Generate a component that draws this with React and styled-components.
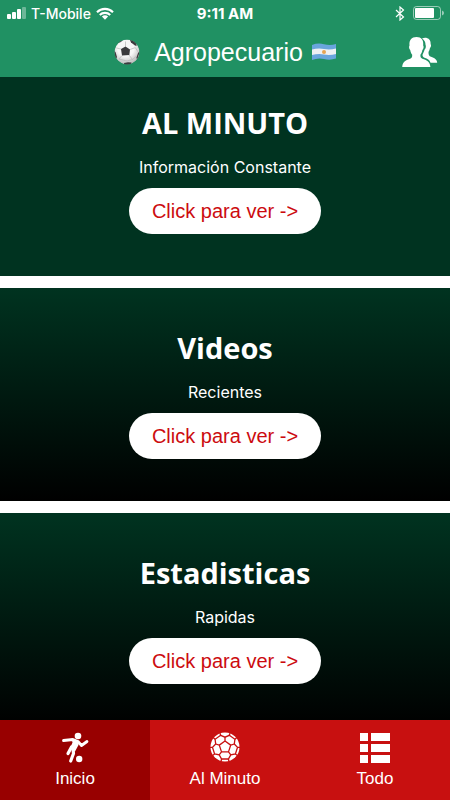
import React, { useState } from "react";
import styled, { createGlobalStyle } from "styled-components";

const GlobalStyle = createGlobalStyle`
  * {
    box-sizing: border-box;
  }
  body {
    margin: 0;
    font-family: "Liberation Sans", Arial, sans-serif;
  }
`;

const Screen = styled.div`
  display: flex;
  flex-direction: column;
  height: 100vh;
  background-color: white;
`;

const Header = styled.header`
  flex: none;
  color: white;
  background-color: #209163;
`;

const StatusBar = styled.div`
  display: grid;
  grid-template-columns: 1fr auto 1fr;
  align-items: center;
  height: 26px;
  padding: 0 6px;
  font-family: Inter, sans-serif;
  font-size: 14px;
  font-weight: 500;
`;

const StatusGroup = styled.div`
  display: flex;
  align-items: center;
  justify-content: ${({ $end }) => ($end ? "flex-end" : "flex-start")};
  gap: ${({ $end }) => ($end ? "8px" : "5px")};
`;

const Clock = styled.time`
  font-size: 15px;
  font-weight: 700;
`;

const TitleBar = styled.div`
  display: grid;
  grid-template-columns: 1fr auto 1fr;
  align-items: center;
  height: 51px;
  padding: 0 12px;
`;

const Title = styled.h1`
  grid-column: 2;
  display: flex;
  align-items: center;
  margin: 0;
  font-size: 25px;
  font-weight: 400;
  line-height: 32px;
`;

const TitleText = styled.span`
  margin: 0 9px 0 14px;
`;

const IconButton = styled.button`
  display: flex;
  justify-self: end;
  padding: 0;
  border: none;
  color: inherit;
  background: none;
  cursor: pointer;
`;

const Content = styled.main`
  display: flex;
  flex: 1;
  flex-direction: column;
  gap: 12px;
  min-height: 0;
  overflow-y: auto;
  scrollbar-width: none;
`;

const Card = styled.section`
  display: flex;
  flex: none;
  flex-direction: column;
  align-items: center;
  padding: ${({ $flat }) => ($flat ? "28px" : "42px")} 16px 42px;
  color: white;
  background: ${({ $flat }) =>
    $flat ? "#003320" : "linear-gradient(#003320, #000000)"};
`;

const CardTitle = styled.h2`
  margin: 0 0 14px;
  font-family: "Open Sans", sans-serif;
  font-size: 29px;
  font-weight: 700;
  line-height: 36px;
`;

const CardText = styled.p`
  margin: 0 0 9px;
  font-family: Inter, sans-serif;
  font-size: 16px;
  line-height: 24px;
`;

const CardButton = styled.button`
  height: 46px;
  padding: 0 23px;
  border: none;
  border-radius: 23px;
  font-family: inherit;
  font-size: 20px;
  color: #cc0b0f;
  background-color: white;
  cursor: pointer;
`;

const TabBar = styled.nav`
  display: grid;
  flex: none;
  grid-template-columns: repeat(3, 1fr);
  height: 80px;
`;

const Tab = styled.button`
  display: flex;
  flex-direction: column;
  align-items: center;
  padding: 11px 0 0;
  border: none;
  font-family: inherit;
  font-size: 17px;
  line-height: 20px;
  color: white;
  background-color: ${({ $active }) => ($active ? "#980000" : "#c81010")};
  cursor: pointer;

  svg {
    margin-bottom: 4px;
  }
`;

const SignalIcon = () => (
  <svg width="20" height="12" viewBox="0 0 20 12" fill="currentColor">
    <rect x="1" y="7" width="4" height="5" rx="1" />
    <rect x="6" y="5" width="4" height="7" rx="1" />
    <rect x="11" y="2" width="4" height="10" rx="1" />
    <rect x="16" y="0" width="4" height="12" rx="1" opacity="0.35" />
  </svg>
);

const WifiIcon = () => (
  <svg width="18" height="13" viewBox="0 0 18 13" fill="none">
    <g stroke="currentColor" strokeWidth="2.1">
      <path d="M1 5.2A11.4 11.4 0 0 1 17 5.2" />
      <path d="M3.8 8A7.4 7.4 0 0 1 14.2 8" />
    </g>
    <path d="M5.9 9.6a4.4 4.4 0 0 1 6.2 0L9 12.8z" fill="currentColor" />
  </svg>
);

const BluetoothIcon = () => (
  <svg width="10" height="15" viewBox="0 0 10 15" fill="none">
    <path
      d="M1 4l7.5 7L5 14V1l3.5 3L1 11"
      stroke="currentColor"
      strokeWidth="1.2"
    />
  </svg>
);

const BatteryIcon = () => (
  <svg width="31" height="14" viewBox="0 0 31 14">
    <rect
      x="0.5"
      y="0.5"
      width="27"
      height="13"
      rx="3"
      fill="none"
      stroke="currentColor"
      opacity="0.55"
    />
    <rect x="2" y="2" width="19" height="10" rx="1" fill="currentColor" />
    <path d="M29 4.500q2 .8 2 2.500t-2 2.500z" fill="currentColor" opacity="0.55" />
  </svg>
);

const BallEmoji = () => (
  <svg width="26" height="26" viewBox="0 0 26 26">
    <defs>
      <radialGradient id="leather" cx="45%" cy="35%" r="65%">
        <stop offset="0.5" stopColor="#f7f7f7" />
        <stop offset="1" stopColor="#b9b9b9" />
      </radialGradient>
      <clipPath id="ballEdge">
        <circle cx="13" cy="13" r="12.5" />
      </clipPath>
    </defs>
    <g clipPath="url(#ballEdge)">
      <circle cx="13" cy="13" r="12.5" fill="url(#leather)" />
      <path
        d="M11.5 7.500V2.500M16 10.500l5.500-2M15 16l3.500 4.500M8 16.500L5 20M7 10L2.500 9M21.500 9l3 4.500M18.500 20.500l4-3.500M18.500 20.500L13 22l-8-2"
        fill="none"
        stroke="#b4b4b4"
        strokeWidth="0.7"
      />
      <g fill="#3b3b3d">
        <path d="M7 10l4.500-2.500 4.500 3-.7 5.500-7.300.5z" />
        <path d="M16 1l1 2.500 4 3L22.500 7V0z" />
        <path d="M4 4l3-1 2-2.500L4 0z" />
        <path d="M0 12l1.500 1L3 18l-1.500 3z" />
        <path d="M26 12l-2 2-1.500 4.500L23 21z" />
        <path d="M10 24l4-.8 3.500.3-1 3h-6z" />
      </g>
    </g>
  </svg>
);

const FlagEmoji = () => (
  <svg width="24" height="18" viewBox="0 0 24 18">
    <defs>
      <clipPath id="flagWave">
        <path d="M0 2q6-2.500 12-.8T24 1v14.500q-6 2-12 .5T0 17z" />
      </clipPath>
    </defs>
    <g clipPath="url(#flagWave)">
      <rect width="24" height="18" fill="#69a5dd" />
      <path d="M0 6.500q6-1.500 12-.5t12-.5v5.500q-6 1.500-12 .5T0 12z" fill="#eef0f3" />
      <circle cx="12" cy="9" r="2" fill="#e5a454" />
    </g>
  </svg>
);

const PeopleIcon = () => (
  <svg width="36" height="30" viewBox="0 0 36 30" fill="currentColor">
    <path d="M20 1.500C24.500-.5 29 2 28.600 7c.8 1 .4 3-.6 4-.4 2-1 3-1.500 4 0 3 .5 4 2.500 4.800 3.500 1.200 6 2.500 6.200 6H28.500c-1-3-3-4-6-5-1.500-.6-2-1.500-2-3 1-2 1.600-3.500 2-5 1.500-1.500 1.600-3.500 1-5C23.500 5 22.500 3 20 1.500z" />
    <path d="M14.500 0c5 0 7.300 3 6.700 8.500.8 1 .4 3.500-.8 4.500-.5 2.500-1.200 3.800-2 4.800 0 2.200.2 3.200 2 4 4 1.400 7.600 2.600 8 8.200H.2c.4-5.600 4-6.800 8-8.200 1.800-.8 2-1.800 2-4-.8-1-1.500-2.300-2-4.800C7 12 6.700 9.500 7.500 8.500 7 3 9.500 0 14.500 0z" />
  </svg>
);

const PlayerIcon = () => (
  <svg width="30" height="34" viewBox="0 0 30 34" fill="currentColor">
    <circle cx="18" cy="5" r="3.300" />
    <g
      fill="none"
      stroke="currentColor"
      strokeLinecap="round"
      strokeLinejoin="round"
    >
      <path d="M3.500 9.500L13 8.500l5 2 3.500 4 5.500-4" strokeWidth="2.800" />
      <path d="M11.500 16L8 22.500" strokeWidth="3.200" />
      <path d="M13 18l.5 4.500-2.800 7.500" strokeWidth="3.200" />
    </g>
    <path d="M11.500 7.500l7.500 2.500-.5 4-3.500 6.500-5-3 2.500-6z" />
    <circle cx="19.200" cy="28" r="3.200" />
  </svg>
);

const BallIcon = () => (
  <svg width="30" height="34" viewBox="0 0 30 34">
    <circle cx="15" cy="16" r="14.500" fill="currentColor" />
    <g transform="translate(0 -1)" fill="none" stroke="#c81010">
      <path
        d="M15 11l5.700 4.100-2.200 6.800h-7l-2.200-6.800zM15 11V7.200M20.700 15.100l3.600-1.100M18.500 21.900l2.300 3M11.500 21.900l-2.300 3M9.300 15.100L5.700 14"
        strokeWidth="1.300"
      />
      <path
        d="M10.700 5.300L15 7.200l4.300-1.900 5.600 4-.6 4.700 3.200 3.400-2.100 6.600-4.600.9-2.400 4.100h-6.800l-2.400-4.100-4.600-.9-2.100-6.600L5.700 14l-.6-4.700z"
        strokeWidth="1.300"
      />
      <path
        d="M19.300 5.300l.9-2.500M24.900 9.300l2-1.800M27.500 17.400h2.500M25.400 24l2 1.500M18.400 29l.6 2.500M11.600 29l-.6 2.500M4.600 24l-2 1.500M2.500 17.400H0M5.100 9.300l-2-1.800M10.700 5.300l-.9-2.500"
        strokeWidth="1.300"
      />
    </g>
  </svg>
);

const ListIcon = () => (
  <svg width="30" height="34" viewBox="0 0 30 34" fill="currentColor">
    <path d="M0 2h8v8H0zM11 2h19v8H11zM0 13h8v8H0zM11 13h19v8H11zM0 24h8v8H0zM11 24h19v8H11z" />
  </svg>
);

const cards = [
  { title: "AL MINUTO", text: "Información Constante", flat: true },
  { title: "Videos", text: "Recientes" },
  { title: "Estadisticas", text: "Rapidas" },
];

const tabs = [
  { name: "Inicio", Icon: PlayerIcon },
  { name: "Al Minuto", Icon: BallIcon },
  { name: "Todo", Icon: ListIcon },
];

const App = () => {
  const [activeTab, setActiveTab] = useState("Inicio");

  return (
    <Screen>
      <GlobalStyle />
      <Header>
        <StatusBar>
          <StatusGroup>
            <SignalIcon />
            T-Mobile
            <WifiIcon />
          </StatusGroup>
          <Clock>9:11 AM</Clock>
          <StatusGroup $end>
            <BluetoothIcon />
            <BatteryIcon />
          </StatusGroup>
        </StatusBar>
        <TitleBar>
          <Title>
            <BallEmoji />
            <TitleText>Agropecuario</TitleText>
            <FlagEmoji />
          </Title>
          <IconButton aria-label="Usuarios">
            <PeopleIcon />
          </IconButton>
        </TitleBar>
      </Header>
      <Content>
        {cards.map(({ title, text, flat }) => (
          <Card key={title} $flat={flat}>
            <CardTitle>{title}</CardTitle>
            <CardText>{text}</CardText>
            <CardButton>Click para ver -&gt;</CardButton>
          </Card>
        ))}
      </Content>
      <TabBar>
        {tabs.map(({ name, Icon }) => (
          <Tab
            key={name}
            $active={name === activeTab}
            onClick={() => setActiveTab(name)}
          >
            <Icon />
            {name}
          </Tab>
        ))}
      </TabBar>
    </Screen>
  );
};

export default App;
